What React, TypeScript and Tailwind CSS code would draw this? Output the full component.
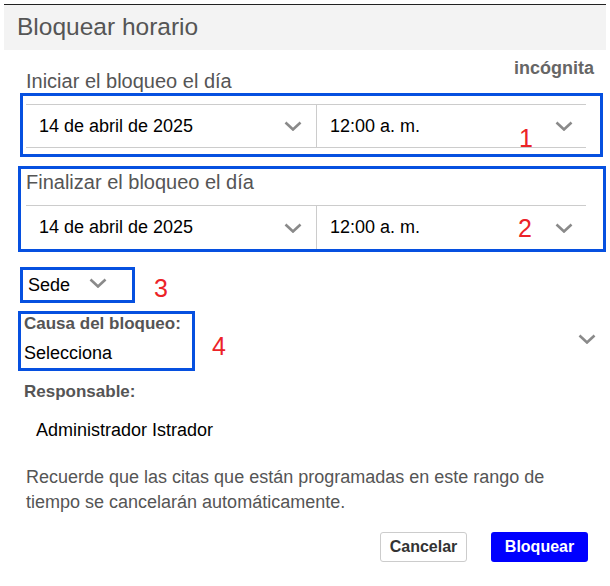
import React from "react";

const Chevron: React.FC<{ className?: string }> = ({ className }) => (
  <svg width="18" height="10" viewBox="0 0 18 10" className={className}>
    <polyline points="1.5,1.5 9,8.5 16.5,1.5" fill="none" stroke="#8a8a8a" strokeWidth="2.6" />
  </svg>
);

const Mark: React.FC<{ n: string; className: string }> = ({ n, className }) => (
  <span className={`absolute text-[25px] leading-none text-[#ec2227] font-['Liberation_Sans'] ${className}`}>
    {n}
  </span>
);

const DateTimeRow: React.FC<{ mark: React.ReactNode; bottom?: boolean }> = ({ mark, bottom }) => (
  <div className={`relative flex h-[44px] border-t border-[#cccccc] ${bottom ? "border-b" : ""}`}>
    <div className="flex w-[291px] items-center justify-between border-r border-[#cccccc] pl-[13px] pr-[14px]">
      <span>14 de abril de 2025</span>
      <Chevron />
    </div>
    <div className="flex flex-1 items-center justify-between pl-[13px] pr-[13px]">
      <span>12:00 a. m.</span>
      <Chevron />
    </div>
    {mark}
  </div>
);

export default function App() {
  return (
    <div className="w-[610px] min-h-[586px] bg-white font-['Liberation_Sans',Arial,sans-serif] text-[18px] text-black">
      {/* Encabezado */}
      <div className="px-[4px] pt-[4px]">
        <div className="flex h-[46px] items-center border-t border-[#222] bg-[#f3f3f3] pl-[13px] text-[24.5px] text-[#555]">
          Bloquear horario
        </div>
      </div>

      <div className="pl-[18px] pr-[4px]">
        <div className="mt-[8px] flex items-start justify-between">
          <span className="ml-[8px] mt-[12px] text-[20px] leading-[23px] text-[#555]">Iniciar el bloqueo el día</span>
          <span className="mr-[12px] text-[18px] font-bold leading-[20px] text-[#666]">incógnita</span>
        </div>

        {/* 1 */}
        <div className="ml-[2px] w-[583px] border-[3px] border-[#0650e0] pb-[6px] pl-[3px] pr-[14px] pt-[8px]">
          <DateTimeRow bottom mark={<Mark n="1" className="left-[493px] top-[21px]" />} />
        </div>

        {/* 2 */}
        <div className="mt-[9px] w-[588px] border-[3px] border-[#0650e0] pl-[5px] pr-[17px] pt-[2px]">
          <div className="mb-[11px] text-[20px] leading-[23px] text-[#555]">Finalizar el bloqueo el día</div>
          <DateTimeRow mark={<Mark n="2" className="left-[492px] top-[10px]" />} />
        </div>

        {/* 3 */}
        <div className="relative ml-[2px] mt-[15px] flex h-[36px] w-[115px] items-center border-[3px] border-[#0650e0] pl-[5px]">
          <span>Sede</span>
          <Chevron className="ml-[19px] -mt-[5px]" />
          <Mark n="3" className="left-[131px] top-[6px]" />
        </div>

        {/* 4 */}
        <div className="relative flex items-start">
          <div className="mt-[8px] h-[60px] w-[177px] border-[3px] border-[#0650e0] pl-[3px]">
            <div className="text-[17px] font-bold leading-[20px] text-[#555]">Causa del bloqueo:</div>
            <div className="mt-[8px] leading-[22px]">Selecciona</div>
          </div>
          <Mark n="4" className="left-[194px] top-[31px]" />
          <Chevron className="absolute right-[10px] top-[31px]" />
        </div>

        <div className="ml-[6px] mt-[11px] text-[17px] font-bold leading-[20px] text-[#555]">Responsable:</div>
        <div className="ml-[18px] mt-[17px] leading-[22px]">Administrador Istrador</div>

        <p className="ml-[8px] mt-[24px] w-[540px] leading-[25px] text-[#555]">
          Recuerde que las citas que están programadas en este rango de tiempo se cancelarán automáticamente.
        </p>

        <div className="mt-[17px] flex justify-end gap-[24px] pr-[18px]">
          <button className="h-[30px] w-[87px] rounded-[3px] border border-[#cccccc] bg-white text-[16px] font-bold text-[#333]">
            Cancelar
          </button>
          <button className="h-[30px] w-[97px] rounded-[3px] bg-[#0000ff] text-[16px] font-bold text-white">
            Bloquear
          </button>
        </div>
      </div>
    </div>
  );
}
